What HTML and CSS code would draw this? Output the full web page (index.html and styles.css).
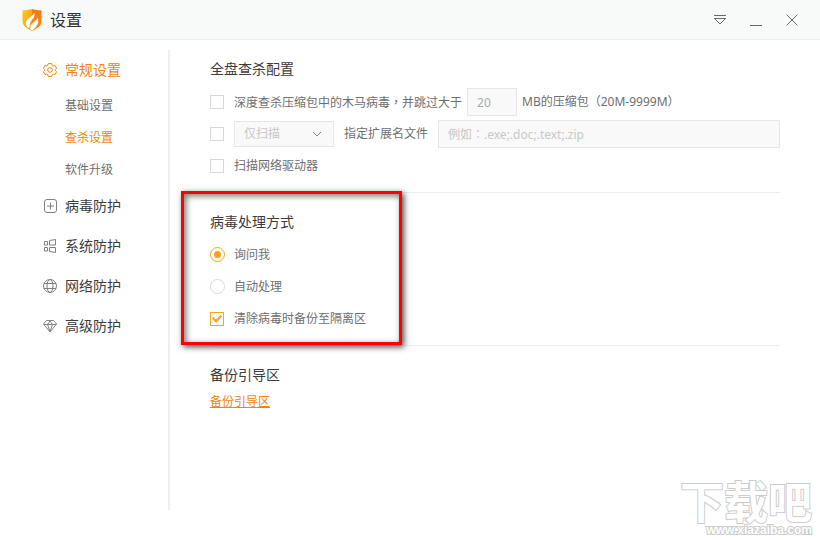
FILE: index.html
```
<!DOCTYPE html>
<html lang="zh-CN">
<head>
<meta charset="utf-8">
<title>设置</title>
<link rel="stylesheet" href="styles.css">
</head>
<body>
<header class="titlebar">
  <svg class="logo" viewBox="0 0 20 24" aria-hidden="true">
    <defs>
      <linearGradient id="shield" x1="0" y1="0" x2="1" y2="1">
        <stop offset="0" stop-color="#ffc81e"/>
        <stop offset="1" stop-color="#ff9410"/>
      </linearGradient>
      <linearGradient id="shade" x1="0" y1="0" x2="0" y2="1">
        <stop offset="0" stop-color="#f47a0c"/>
        <stop offset="1" stop-color="#ff8a10"/>
      </linearGradient>
    </defs>
    <path fill="url(#shield)" d="M10 1C7 2 4 2.300.500 2.300V13c0 5 4.500 7.500 9.500 10z"/>
    <path fill="url(#shade)" d="M10 1c3 1 6 1.300 9.500 1.300V13c0 5-4.500 7.500-9.500 10z"/>
    <path fill="#fff" d="M12 4.500c1.200 2.500.500 4.500-1.300 6.500-2 2.300-3.500 4-3 8L6.600 20C4.200 18.500 3.300 16 4 14c.400-1.700 1.800-3 3.800-4.500 2.200-1.700 3.800-3 4.200-5z"/>
    <path fill="#fff" d="M15.500 9.500c1.500 3.500.700 6.500-1.300 9-1 1.300-2.300 2.700-4.200 3.900l-1.700-1.200c-.300-2.700.500-4.700 2.500-6.200s4.200-3 4.700-5.500z"/>
  </svg>
  <h1 class="title">设置</h1>
  <div class="window-buttons">
    <button class="window-button" type="button" aria-label="菜单">
      <svg viewBox="0 0 12 13"><path d="M0 2.500h12M0 5.500h12M1 6l5 5 5-5"/></svg>
    </button>
    <button class="window-button" type="button" aria-label="最小化">
      <svg viewBox="0 0 12 13"><path d="M0 12.500h12"/></svg>
    </button>
    <button class="window-button" type="button" aria-label="关闭">
      <svg viewBox="0 0 12 13"><path d="M.500 1.500l11 11M11.500 1.500l-11 11"/></svg>
    </button>
  </div>
</header>
<div class="layout">
  <nav class="sidebar">
    <a class="nav-item active" href="#general">
      <svg viewBox="0 0 14 14"><path d="M5.300.600h3.400l.600 1.700 1 .600 1.800-.400 1.500 2.800L12.400 6.500v1l1.200 1.200-1.500 2.800-1.800-.400-1 .600-.600 1.700H5.300l-.600-1.700-1-.600-1.800.400L.400 8.700 1.600 7.500v-1L.400 5.300l1.500-2.800 1.800.400 1-.600z"/><circle cx="7" cy="7" r="2.300"/></svg>
      常规设置</a>
    <a class="sub-item" href="#basic">基础设置</a>
    <a class="sub-item active" href="#scan">查杀设置</a>
    <a class="sub-item" href="#upgrade">软件升级</a>
    <a class="nav-item" href="#virus">
      <svg viewBox="0 0 14 14"><rect x="1.500" y=".500" width="12" height="13" rx="2.500"/><path d="M7.500 3.500v7M4 7h7"/></svg>
      病毒防护</a>
    <a class="nav-item" href="#system">
      <svg viewBox="0 0 14 14"><path d="M1.500 2.500h3v3.500h-3zM6.500 1.500l6-1v5.500h-6zM1.500 8.500h3v3.500h-3zM6.500 8.500h6v5l-6-1z"/></svg>
      系统防护</a>
    <a class="nav-item" href="#network">
      <svg viewBox="0 0 14 14"><circle cx="7" cy="7" r="6.500"/><ellipse cx="7" cy="7" rx="3" ry="6.500"/><path d="M1 4.500h12M1 9.500h12"/></svg>
      网络防护</a>
    <a class="nav-item" href="#advanced">
      <svg viewBox="0 0 14 14"><path d="M3.500 1.500h7l3 3.500L7 13 .500 5zM.500 5.500h13M4.500 5.500L7 12.500l2.500-7M4.500 5.500L7 2l2.500 3.500"/></svg>
      高级防护</a>
  </nav>
  <main class="content">
    <section class="section">
      <h2 class="heading">全盘查杀配置</h2>
      <div class="row">
        <input class="check" type="checkbox" id="deep">
        <label for="deep">深度查杀压缩包中的木马病毒<span class="centered-mark" lang="zh-TW">，</span>并跳过大于</label>
        <input class="field size" type="text" value="20" aria-label="压缩包大小" disabled>
        <span>MB的压缩包（20M-9999M）</span>
      </div>
      <div class="row">
        <input class="check" type="checkbox" id="ext" aria-label="指定扩展名">
        <div class="picker">
          <select class="select" aria-label="扫描方式" disabled><option>仅扫描</option></select>
          <svg class="chevron" viewBox="0 0 10 6" aria-hidden="true"><path d="M1 1l4 4 4-4"/></svg>
        </div>
        <label class="ext-label" for="extlist">指定扩展名文件</label>
        <input class="field extensions" type="text" id="extlist" lang="zh-TW" placeholder="例如：.exe;.doc;.text;.zip" disabled>
      </div>
      <div class="row">
        <input class="check" type="checkbox" id="netdrive">
        <label for="netdrive">扫描网络驱动器</label>
      </div>
    </section>
    <section class="section">
      <h2 class="heading">病毒处理方式</h2>
      <div class="row">
        <input class="check radio" type="radio" name="handling" id="ask" checked>
        <label for="ask">询问我</label>
      </div>
      <div class="row">
        <input class="check radio" type="radio" name="handling" id="auto">
        <label for="auto">自动处理</label>
      </div>
      <div class="row">
        <input class="check" type="checkbox" id="backup" checked>
        <label for="backup">清除病毒时备份至隔离区</label>
      </div>
      <div class="highlight"></div>
    </section>
    <section class="section">
      <h2 class="heading">备份引导区</h2>
      <a class="link" href="#boot">备份引导区</a>
    </section>
  </main>
</div>
<div class="watermark">
  <div class="mark-name">下载吧</div>
  <div class="mark-url">www.xiazaiba.com</div>
</div>
</body>
</html>
```
FILE: styles.css
```
* { box-sizing: border-box; }

body {
  margin: 0;
  min-height: 100vh;
  display: flex;
  flex-direction: column;
  background: #fff;
  color: #6e6e6e;
  font: 12px/20px "Noto Sans", "Noto Sans CJK SC", sans-serif;
}

input, select, button { font: inherit; margin: 0; }
a { color: inherit; text-decoration: none; }

.titlebar {
  height: 40px;
  display: flex;
  align-items: center;
  padding: 0 22px;
  background: #f8faf9;
  border-bottom: 1px solid #ededed;
}
.logo { width: 20px; height: 24px; }
.title {
  margin: 0 0 0 8px;
  font-size: 16px;
  font-weight: 400;
  color: #333;
}
.window-buttons {
  margin-left: auto;
  display: flex;
  gap: 24px;
}
.window-button {
  width: 12px;
  height: 13px;
  padding: 0;
  border: 0;
  background: none;
}
.window-button svg {
  display: block;
  fill: none;
  stroke: #666b68;
}

.layout { flex: 1; display: flex; }

.sidebar {
  width: 170px;
  margin: 10px 0 30px;
  border-right: 2px solid #efefef;
}
.nav-item {
  height: 40px;
  display: flex;
  align-items: center;
  gap: 8px;
  padding-left: 43px;
  font-size: 14px;
  color: #3c3c3c;
}
.nav-item svg {
  width: 14px;
  height: 14px;
  fill: none;
  stroke: #808080;
}
.nav-item.active svg { stroke: #f5820b; }
.sub-item {
  height: 32px;
  display: flex;
  align-items: center;
  padding-left: 65px;
}
.nav-item.active, .sub-item.active { color: #f5820b; }

.content { flex: 1; padding: 0 40px; }
.section {
  position: relative;
  padding: 19px 0 10px;
  border-bottom: 1px solid #ededed;
}
.section:last-child { border-bottom: 0; }
.heading {
  margin: 0 0 7px;
  font-size: 14px;
  font-weight: 400;
  color: #3c3c3c;
}
.row {
  height: 32px;
  display: flex;
  align-items: center;
}
.centered-mark { font-family: "Noto Sans CJK TC", sans-serif; }

.check {
  appearance: none;
  flex: none;
  width: 14px;
  height: 14px;
  margin-right: 10px;
  display: grid;
  place-items: center;
  border: 1px solid #d8d8d8;
  background: #fff;
}
.check:checked { border-color: #ffa21a; }
.check:checked::before {
  content: "";
  width: 10px;
  height: 8px;
  background: #ffa21a;
  clip-path: polygon(0 45%, 15% 25%, 40% 55%, 85% 0, 100% 18%, 40% 100%);
}
.check.radio {
  width: 15px;
  height: 15px;
  margin: 0 9px 1px 0;
  border-radius: 50%;
}
.check.radio:checked::before {
  width: 7px;
  height: 7px;
  border-radius: 50%;
  clip-path: none;
}

.field, .select {
  height: 28px;
  padding: 0 9px;
  border: 1px solid #e6e6e6;
  border-radius: 0;
  background: #f9f9f9;
  color: #aaa;
}
.size { width: 50px; margin: 0 5px; }
.extensions { flex: 1; min-width: 0; }
.extensions::placeholder {
  color: #c8c8c8;
  font-family: "Noto Sans", "Noto Sans CJK TC", sans-serif;
}
.picker { position: relative; display: flex; }
.select {
  appearance: none;
  width: 100px;
  height: 26px;
  color: #c8c8c8;
  opacity: 1;
}
.chevron {
  position: absolute;
  top: 10px;
  right: 12px;
  width: 10px;
  height: 6px;
  fill: none;
  stroke: #888;
}
.ext-label { margin: 0 10px; }

.highlight {
  position: absolute;
  top: -2px;
  bottom: 0;
  left: -29px;
  width: 221px;
  border: 3px solid #f00;
  box-shadow: 2px 2px 6px rgba(0, 0, 0, .7), inset 2px 2px 6px rgba(0, 0, 0, .55);
  pointer-events: none;
}

.link {
  display: inline-block;
  color: #f5820b;
  text-decoration: underline;
}

.watermark {
  position: absolute;
  right: 8px;
  bottom: 2px;
  text-align: right;
  color: #fff;
  paint-order: stroke fill;
  -webkit-text-stroke: 2px #ccc;
  pointer-events: none;
}
.mark-name {
  font: 700 44px/44px "Noto Sans CJK SC", sans-serif;
}
.mark-url {
  font: 700 12px/16px "Liberation Sans", sans-serif;
}
```
